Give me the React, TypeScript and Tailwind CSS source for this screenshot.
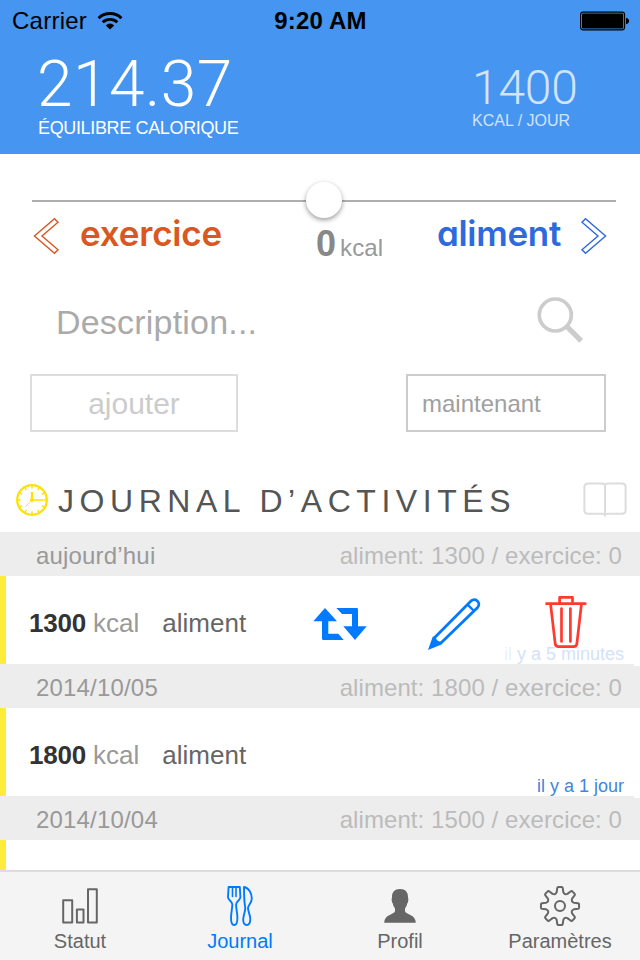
import type { ReactNode } from "react";

function gearPath() {
  const pts: string[] = [];
  const at = (r: number, deg: number) => {
    const a = (deg * Math.PI) / 180;
    return `${(20 + r * Math.cos(a)).toFixed(2)} ${(20 + r * Math.sin(a)).toFixed(2)}`;
  };
  for (let i = 0; i < 8; i++) {
    const c = i * 45 - 90;
    pts.push(`${i === 0 ? "M" : "L"}${at(14.2, c - 13.5)}`);
    pts.push(`L${at(18.4, c - 8.5)}`);
    pts.push(`Q${at(19.4, c - 7)} ${at(19.1, c - 4)}`);
    pts.push(`L${at(19.1, c + 4)}`);
    pts.push(`Q${at(19.4, c + 7)} ${at(18.4, c + 8.5)}`);
    pts.push(`L${at(14.2, c + 13.5)}`);
    pts.push(`Q${at(11.8, c + 22.5)} ${at(14.2, c + 31.5)}`);
  }
  return pts.join(" ") + "Z";
}

function WifiIcon() {
  return (
    <svg className="ml-[10px] h-5 w-[26px]" viewBox="0 0 26 20" fill="none" stroke="#000">
      <path d="M1.6 7.2C7.8 1 18.2 1 24.4 7.2" strokeWidth="3" />
      <path d="M5.7 11.3C9.7 7.4 16.3 7.4 20.3 11.3" strokeWidth="2.8" />
      <path d="M8.8 14.4Q13 10.8 17.2 14.4L13 18.6Z" fill="#000" stroke="none" />
    </svg>
  );
}

function BatteryIcon() {
  return (
    <svg className="h-5 w-[50px]" viewBox="0 0 50 20">
      <rect x="0.6" y="1.1" width="44" height="17.8" rx="2.6" fill="none" stroke="#000" strokeWidth="1.1" />
      <rect x="2" y="2.5" width="41.2" height="15" rx="1.2" />
      <path d="M46 7Q49 7.4 49 10T46 13.2Z" />
    </svg>
  );
}

function ChevronOutline({ flip }: { flip?: boolean }) {
  return (
    <svg
      className={flip ? "h-[38px] w-[28px] -scale-x-100" : "h-[38px] w-[28px]"}
      viewBox="0 0 28 38"
      fill="none"
      stroke="currentColor"
      strokeWidth="1.4"
    >
      <path d="M2.4 19L22.5 1.7L26 5.2L10 19L26 32.8L22.5 36.3Z" />
    </svg>
  );
}

function SearchIcon() {
  return (
    <svg className="h-[48px] w-[48px]" viewBox="0 0 48 48" fill="none" stroke="#ccc">
      <circle cx="19.3" cy="19" r="16" strokeWidth="3.7" />
      <path d="M31 30.7L45.2 44.9" strokeWidth="5.2" />
    </svg>
  );
}

function ClockIcon() {
  return (
    <svg className="h-8 w-8" viewBox="0 0 32 32" fill="none" stroke="#ffe000">
      <circle cx="16" cy="16" r="14.8" strokeWidth="2.2" />
      {[0, 30, 60, 90, 120, 150, 180, 210, 240, 270, 300, 330].map((a) => (
        <path key={a} d="M16 2V4.6" strokeWidth="1.4" transform={`rotate(${a} 16 16)`} />
      ))}
      <path d="M16 8V16" strokeWidth="2.4" />
      <path d="M16 16H27" strokeWidth="1.5" />
      <path d="M16 16L9.5 22.5" strokeWidth="0.9" />
      <circle cx="16" cy="16" r="2" fill="#ffe000" stroke="none" />
    </svg>
  );
}

function BookIcon() {
  return (
    <svg className="h-9 w-11" viewBox="0 0 44 36" fill="none" stroke="#ddd" strokeWidth="2">
      <path d="M22 3.5Q21 2.4 18 2.4H5Q1.4 2.4 1.4 6V29Q1.4 32.7 5 32.7H19Q21.5 32.7 22 34Q22.5 32.7 25 32.7H39Q42.6 32.7 42.6 29V6Q42.6 2.4 39 2.4H26Q23 2.4 22 3.5Z" />
      <path d="M22 3V35" />
    </svg>
  );
}

function RepeatIcon() {
  return (
    <svg className="h-[36px] w-[56px]" viewBox="312 605 56 36" fill="#007aff">
      <path d="M325 608L337 621.3H328.3V633.7H338.3L343.7 640H323.5Q322 640 322 638.5V621.3H313.3Z" />
      <path d="M336.3 608H356.8Q358 608 358 609.2V626.3H366.7L355 640L343.3 626.3H352V614H342Z" />
    </svg>
  );
}

function PencilIcon() {
  return (
    <svg className="h-[54px] w-[54px]" viewBox="427 596 54 54" fill="none" stroke="#007aff" strokeWidth="2.8">
      <path d="M434 638.2L471.2 600.8C475.5 597 481.5 603.2 477.6 607.4L440.4 643.6" />
      <path d="M467.6 604.6L474 611" strokeWidth="2.4" />
      <path d="M428 650L432.7 636.8L436 636.2C435.5 639.5 438 642 441.8 641.6L441.5 644.6Z" fill="#007aff" stroke="none" />
    </svg>
  );
}

function TrashIcon() {
  return (
    <svg
      className="h-[54px] w-[44px]"
      viewBox="544 596 44 54"
      fill="none"
      stroke="#ff3b30"
      strokeWidth="2.7"
      strokeLinecap="round"
      strokeLinejoin="round"
    >
      <path d="M546.5 603.7H585.3M559.6 603V597.4H572.5V603" />
      <path d="M550.6 604.5L555.2 643.5Q555.6 646.7 558.5 646.7H573.6Q576.5 646.7 576.9 643.5L581.4 604.5" />
      <path d="M561.5 608.5V641.5M570.4 608.5V641.5" />
    </svg>
  );
}

function BarsIcon() {
  return (
    <svg className="h-[42px] w-[42px]" viewBox="59 885 42 42" fill="none" stroke="#666" strokeWidth="2" strokeLinejoin="round">
      <rect x="63.2" y="900.2" width="9" height="22.3" />
      <rect x="76.9" y="909.6" width="6.6" height="12.9" />
      <rect x="88" y="889.2" width="8.8" height="33.3" />
    </svg>
  );
}

function CutleryIcon() {
  return (
    <svg className="h-[42px] w-[42px]" viewBox="219 885 42 42" fill="none" stroke="#007aff" strokeWidth="1.9" strokeLinejoin="round">
      <path d="M228.6 887L228 897C228 900.5 232.3 901 232.3 904.5C232.3 909 231 913 231 918C231 922.5 232.3 925 234.2 925S237.4 922.5 237.4 918C237.4 913 236.1 909 236.1 904.5C236.1 901 240.4 900.5 240.4 897L239.8 887Z" />
      <path d="M232.5 887V896.5M236 887V896.5" strokeWidth="1.6" strokeLinecap="round" />
      <path d="M244 887C249 888 251.9 893.5 251.8 898.5C251.7 903.5 248 905 248 908C248 911.5 250.3 915 250.3 919C250.3 923 248.7 925 246.7 925S243.2 923 243.2 919.5C243.2 915.5 245.3 912 245.3 908C244.3 903 244 897 244 887Z" />
    </svg>
  );
}

function PersonIcon() {
  return (
    <svg className="h-[42px] w-[42px]" viewBox="379 885 42 42" fill="#666">
      <path d="M400 889C405.5 889 408.1 892 408 897.5Q408.7 898.5 408.2 901Q408 902.8 407.2 903.5Q406.8 906.5 405 908.5V911.3C406 914.8 415.8 914.5 415.8 922.7H384.2C384.2 914.5 394 914.8 395 911.3V908.5Q393.2 906.5 392.8 903.5Q392 902.8 391.8 901Q391.3 898.5 392 897.5C391.9 892 394.5 889 400 889Z" />
    </svg>
  );
}

function GearIcon() {
  return (
    <svg className="h-[42px] w-[42px]" viewBox="-1 -1 42 42" fill="none" stroke="#666" strokeWidth="2" strokeLinejoin="round">
      <path d={gearPath()} />
      <circle cx="20" cy="20" r="5" />
    </svg>
  );
}

function DayHeader({ day, food }: { day: string; food: number }) {
  return (
    <div className="flex h-11 shrink-0 items-center justify-between bg-[#ededed] pr-[18px] pl-9 pt-[3px] text-[24px] leading-[41px]">
      <span className="tracking-[0.18px] text-[#999]">{day}</span>
      <span className="tracking-[0.08px] text-[#bbb]">aliment: {food} / exercice: 0</span>
    </div>
  );
}

function Entry({ kcal, ago, children }: { kcal: number; ago: ReactNode; children?: ReactNode }) {
  return (
    <div className="relative flex h-[88px] shrink-0 items-center border-l-[6px] border-[#ffeb3b] bg-white pl-[23px] pt-[6px] text-[26px] leading-[34px]">
      <b className="tracking-[-0.2px] text-[#333]">{kcal}</b>
      <span className="ml-[7px] text-[#999]">kcal</span>
      <span className="ml-[23px] text-[#666]">aliment</span>
      <span className="absolute right-4 bottom-0 text-[18px] leading-5 text-[#4285dc]">{ago}</span>
      {children}
      <span className="absolute right-0 -bottom-0.5 z-10 h-0.5 w-1.5 bg-white" />
    </div>
  );
}

function Tab({ label, active, icon }: { label: string; active?: boolean; icon: ReactNode }) {
  return (
    <div className={active ? "flex flex-1 flex-col items-center text-[#007aff]" : "flex flex-1 flex-col items-center text-[#666]"}>
      {icon}
      <span className="mt-[2px] text-[20px] leading-6">{label}</span>
    </div>
  );
}

export default function App() {
  return (
    <div className="flex h-[960px] w-[640px] flex-col overflow-hidden bg-white font-['Liberation_Sans',Arial,sans-serif]">
      <header className="h-[154px] shrink-0 bg-[#4595f1]">
        <div className="grid h-10 grid-cols-3 items-center pt-px pr-[10px] pl-3 text-[24px] leading-10">
          <div className="flex items-center tracking-[0.25px]">
            Carrier
            <WifiIcon />
          </div>
          <b className="pr-px text-center tracking-[0.2px]">9:20 AM</b>
          <div className="flex justify-end">
            <BatteryIcon />
          </div>
        </div>
        <div className="flex text-white">
          <div className="w-[434px] pt-[13px] pl-[38px]">
            <div className="-ml-px font-['Roboto',sans-serif] text-[64px] leading-[64px] font-light tracking-[0.5px]">214.37</div>
            <div className="mt-[2px] text-[18px] leading-[18px] tracking-[-0.35px]">ÉQUILIBRE CALORIQUE</div>
          </div>
          <div className="pt-[24px] pl-[38px] opacity-75">
            <div className="font-['Roboto',sans-serif] text-[48px] leading-[48px] font-light tracking-[-0.2px]">1400</div>
            <div className="mt-px text-[16px] leading-4">KCAL / JOUR</div>
          </div>
        </div>
      </header>

      <section className="h-[318px] shrink-0">
        <div className="relative mr-6 ml-8 pt-[46px]">
          <div className="h-0.5 bg-[#aeaeae]" />
          <div className="absolute top-[28px] left-[274px] h-9 w-9 rounded-full bg-white shadow-[0_2px_5px_rgba(0,0,0,0.4)]" />
        </div>
        <div className="flex h-[68px] items-start pr-8 pl-8 pt-[15px]">
          <div className="flex w-[284px] items-center text-[#d95722]">
            <ChevronOutline />
            <span className="ml-[20px] pb-[6px] font-['Inter',sans-serif] text-[35px] leading-8 font-semibold tracking-[-0.2px] [font-feature-settings:'cv11']">
              exercice
            </span>
          </div>
          <div className="flex items-baseline pt-[5px] text-[#888]">
            <b className="text-[36px] leading-[44px]">0</b>
            <span className="ml-[4px] text-[24px] tracking-[0.1px] text-[#999]">kcal</span>
          </div>
          <div className="flex flex-1 items-center justify-end text-[#2f69de]">
            <span className="mr-[19px] pb-[6px] font-['Inter',sans-serif] text-[35px] leading-8 font-semibold tracking-[-0.3px] [font-feature-settings:'cv11']">
              aliment
            </span>
            <ChevronOutline flip />
          </div>
        </div>
        <div className="flex items-start justify-between pr-[56px] pl-[56px] pt-[26px]">
          <span className="pt-[4px] text-[34px] leading-[44px] tracking-[0.2px] text-[#aaa]">Description...</span>
          <SearchIcon />
        </div>
        <div className="mt-[30px] flex justify-between pr-[34px] pl-[30px]">
          <div className="h-[58px] w-[208px] border-2 border-[#ddd] pt-px text-center text-[30px] leading-[54px] text-[#ccc]">ajouter</div>
          <div className="h-[58px] w-[200px] border-2 border-[#ccc] pl-[14px] pt-px text-[24px] leading-[54px] text-[#a0a0a0]">maintenant</div>
        </div>
      </section>

      <div className="flex h-[60px] shrink-0 items-center pr-[13px] pl-4">
        <div className="-mt-1 h-8">
          <ClockIcon />
        </div>
        <h1 className="ml-[10px] flex-1 pb-[3px] text-[32px] leading-10 tracking-[5.55px] whitespace-nowrap text-[#555]">
          JOURNAL D’ACTIVITÉS
        </h1>
        <div className="-mt-1.5 h-9">
          <BookIcon />
        </div>
      </div>

      <main className="h-[338px] shrink-0 overflow-hidden">
        <DayHeader day="aujourd’hui" food={1300} />
        <Entry
          kcal={1300}
          ago={
            <span className="text-[#d3e2f8]">
              <span className="text-[#e9f1fc]">il</span> y a 5 minutes
            </span>
          }
        >
          <div className="relative ml-[66px] flex items-center gap-[59px]">
            <RepeatIcon />
            <PencilIcon />
            <div className="ml-[4px]">
              <TrashIcon />
            </div>
          </div>
        </Entry>
        <DayHeader day="2014/10/05" food={1800} />
        <Entry kcal={1800} ago="il y a 1 jour" />
        <DayHeader day="2014/10/04" food={1500} />
        <div className="h-[30px] border-l-[6px] border-[#ffeb3b] bg-white" />
      </main>

      <nav className="flex h-[90px] shrink-0 border-t-2 border-[#ddd] bg-[#f4f4f4] pt-[13px]">
        <Tab label="Statut" icon={<BarsIcon />} />
        <Tab label="Journal" active icon={<CutleryIcon />} />
        <Tab label="Profil" icon={<PersonIcon />} />
        <Tab label="Paramètres" icon={<GearIcon />} />
      </nav>
    </div>
  );
}
